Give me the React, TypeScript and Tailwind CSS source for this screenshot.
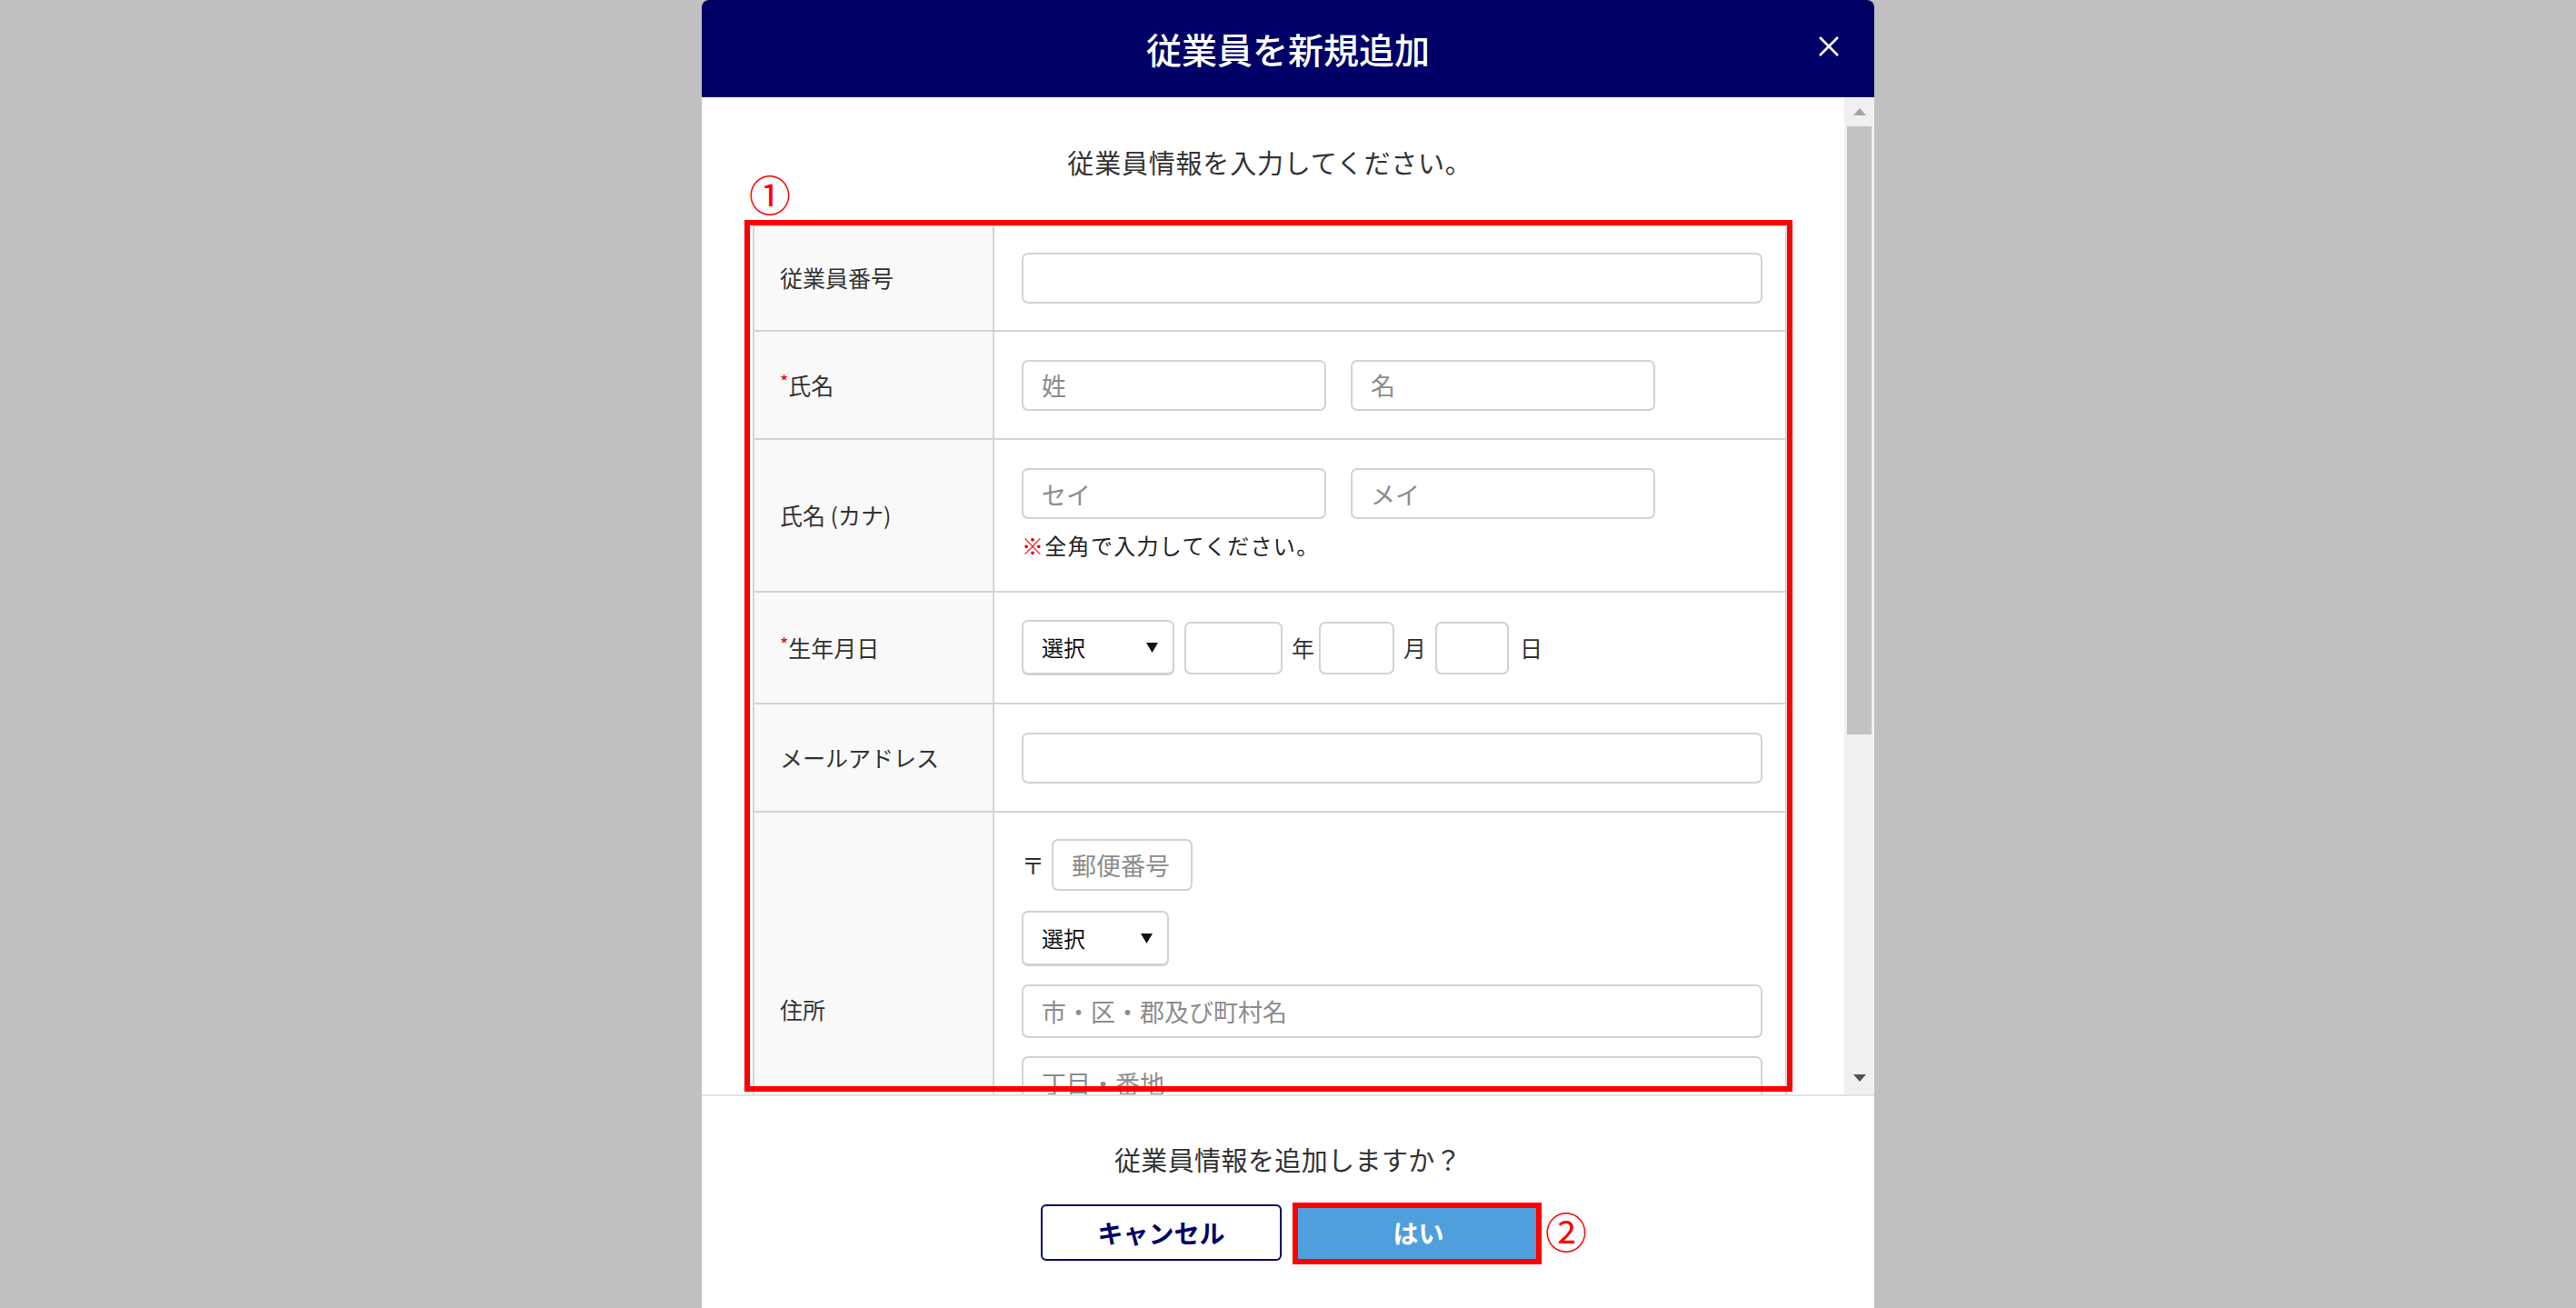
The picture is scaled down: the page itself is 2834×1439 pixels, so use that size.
import type { ReactNode } from 'react';

// Common text input used across the form
function TextBox({ placeholder, className }: { placeholder?: string; className: string }) {
  return (
    <input
      type="text"
      placeholder={placeholder}
      className={`${className} shrink-0 border-2 border-[#d2d2d2] rounded-[7px] bg-white px-[20px] text-[27px] text-[#333] placeholder:text-[#8c8c8c] outline-none`}
    />
  );
}

// Fake select box (native select renders differently per browser)
function SelectBox({ className }: { className: string }) {
  return (
    <div
      className={`${className} shrink-0 flex items-center justify-between border-2 border-[#d2d2d2] border-b-[3px] rounded-[7px] bg-white pl-[20px] pr-[16px] text-[24px] text-[#111]`}
    >
      <span>選択</span>
      <svg width="13" height="11" viewBox="0 0 13 11">
        <path d="M0 0h13L6.5 11z" fill="#111" />
      </svg>
    </div>
  );
}

function Row({
  label,
  required,
  height,
  children,
  cellClass,
}: {
  label: string;
  required?: boolean;
  height: string;
  children: ReactNode;
  cellClass: string;
}) {
  return (
    <div className={`flex border-b-2 border-[#d4d4d4] ${height}`}>
      <div className="w-[264px] shrink-0 bg-[#f9f9f9] border-r-2 border-[#d4d4d4] flex items-center pl-[28px] text-[25px] text-[#333]">
        <span>
          {required && <span className="relative -top-[6px] text-[20px] text-[#e60000]">*</span>}
          {label}
        </span>
      </div>
      <div className={`flex-1 pl-[30px] pr-[25px] ${cellClass}`}>{children}</div>
    </div>
  );
}

export default function App() {
  return (
    <div className="h-[1439px] w-full overflow-hidden bg-[#c0c0c0] flex justify-center font-['Noto_Sans_CJK_JP','Noto_Sans',sans-serif]">
      <div className="w-[1290px] h-[1439px] bg-white rounded-t-[8px] overflow-hidden flex flex-col">
        {/* Header */}
        <div className="relative h-[107px] shrink-0 bg-[#000066] flex items-center justify-center">
          <h1 className="text-[39px] font-medium text-white leading-none">従業員を新規追加</h1>
          <svg
            className="absolute right-[38px] top-[39px]"
            width="24"
            height="24"
            viewBox="0 0 24 24"
            stroke="#fff"
            strokeWidth="2.6"
          >
            <path d="M2 2L22 22M22 2L2 22" />
          </svg>
        </div>

        <div className="flex h-[1097px] shrink-0">
          <div className="relative flex-1 overflow-hidden pt-[54px] pl-[56px] pr-[63px]">
            <p className="text-center text-[29px] tracking-[0.8px] leading-[34px] text-[#333]">
              従業員情報を入力してください。
            </p>

            <div className="mt-[52px] border-t-2 border-x-2 border-[#d4d4d4]">
              <Row label="従業員番号" height="h-[116px]" cellClass="flex items-center">
                <TextBox className="w-full h-[56px]" />
              </Row>
              <Row label="氏名" required height="h-[119px]" cellClass="flex items-center gap-[27px]">
                <TextBox placeholder="姓" className="w-[335px] h-[56px]" />
                <TextBox placeholder="名" className="w-[335px] h-[56px]" />
              </Row>
              <Row label="氏名 (カナ)" height="h-[168px]" cellClass="pt-[31px]">
                <div className="flex gap-[27px]">
                  <TextBox placeholder="セイ" className="w-[335px] h-[56px]" />
                  <TextBox placeholder="メイ" className="w-[335px] h-[56px]" />
                </div>
                <p className="mt-[14px] text-[24px] tracking-[1.3px] leading-[30px] text-[#222]">
                  <span className="text-[#e60000]">※</span>全角で入力してください。
                </p>
              </Row>
              <Row label="生年月日" required height="h-[123px]" cellClass="flex items-center gap-[10px] text-[25px] text-[#333]">
                <SelectBox className="w-[168px] h-[61px]" />
                <TextBox className="w-[108px] h-[58px] ml-[1px]" />
                <span className="mr-[-5px]">年</span>
                <TextBox className="w-[83px] h-[58px]" />
                <span>月</span>
                <TextBox className="w-[81px] h-[58px]" />
                <span className="ml-[2px]">日</span>
              </Row>
              <Row label="メールアドレス" height="h-[119px]" cellClass="flex items-center">
                <TextBox className="w-full h-[56px]" />
              </Row>
              <Row label="住所" height="h-[435px]" cellClass="pt-[29px] flex flex-col items-start">
                <div className="flex items-center gap-[8px] text-[25px] text-[#333]">
                  <span>〒</span>
                  <TextBox placeholder="郵便番号" className="w-[155px] h-[57px]" />
                </div>
                <SelectBox className="mt-[22px] w-[162px] h-[61px]" />
                <TextBox placeholder="市・区・郡及び町村名" className="mt-[20px] w-full h-[59px]" />
                <TextBox placeholder="丁目・番地" className="mt-[20px] w-full h-[59px]" />
                <TextBox placeholder="建物名・部屋番号" className="mt-[20px] w-full h-[59px]" />
              </Row>
            </div>

            {/* Annotation ① and red frame */}
            <span className="absolute left-[52px] top-[82px] text-[46px] leading-none text-[#ff0000]">①</span>
            <div className="pointer-events-none absolute left-[47px] top-[135px] w-[1153px] h-[959px] border-[6px] border-[#ff0000]" />
          </div>

          {/* Scrollbar */}
          <div className="w-[33px] shrink-0 bg-[#f0f0f0] flex flex-col items-center">
            <div className="h-[32px] flex items-center justify-center">
              <svg width="14" height="8" viewBox="0 0 14 8">
                <path d="M7 0L14 8H0z" fill="#a3a3a3" />
              </svg>
            </div>
            <div className="w-[27px] h-[669px] bg-[#c1c1c1]" />
            <div className="flex-1" />
            <div className="h-[36px] flex items-center justify-center">
              <svg width="14" height="8" viewBox="0 0 14 8">
                <path d="M0 0H14L7 8z" fill="#505050" />
              </svg>
            </div>
          </div>
        </div>

        {/* Footer */}
        <div className="border-t-2 border-[#e3e3e3] pt-[52px] flex flex-col items-center">
          <p className="text-[29px] tracking-[0.4px] leading-[34px] text-[#333]">従業員情報を追加しますか？</p>
          <div className="mt-[33px] flex gap-[18px] pl-[4px]">
            <button className="w-[265px] h-[62px] rounded-[6px] border-2 border-[#000066] bg-white text-[28px] font-bold text-[#000066]">
              キャンセル
            </button>
            <div className="relative">
              <button className="w-[265px] h-[62px] bg-[#4f9fdd] text-[28px] font-bold text-white">はい</button>
              <div className="pointer-events-none absolute -left-[6px] -top-[2px] -right-[3px] -bottom-[4px] border-[6px] border-[#ff0000]" />
              <span className="absolute left-[calc(100%+7px)] top-[5px] text-[46px] leading-none text-[#ff0000]">②</span>
            </div>
          </div>
        </div>
      </div>
    </div>
  );
}
